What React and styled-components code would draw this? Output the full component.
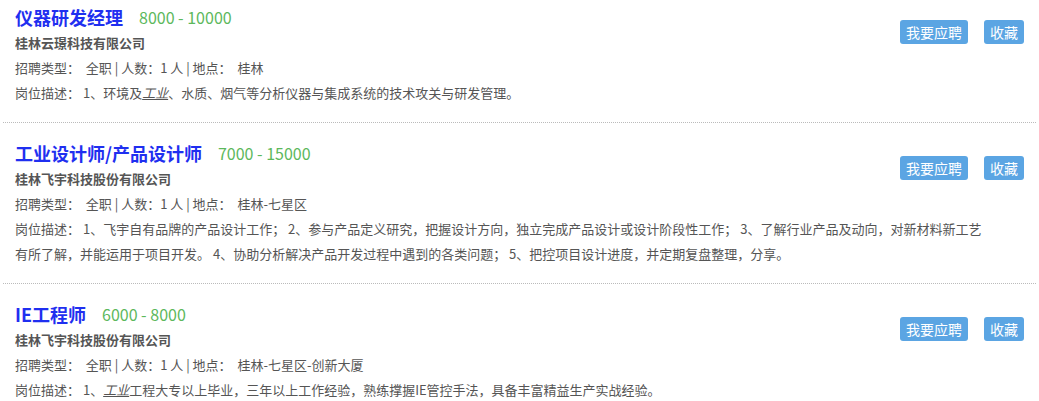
import styled, { createGlobalStyle } from "styled-components";

const GlobalStyle = createGlobalStyle`
    html, body {
        margin: 0;
        padding: 0;
        background: #fff;
    }

    body {
        font-family: "Noto Sans CJK SC", "Noto Sans", sans-serif;
        color: #555;
    }
`;

const List = styled.div`
    width: 1039px;
`;

const Item = styled.div`
    display: grid;
    grid-template-columns: 1fr auto;
    padding: 17px 12px 17px 12px;
    border-bottom: 1px dotted #bbb;
    margin: 0 3px;

    &:first-child {
        padding-top: 4px;
    }

    &:last-child {
        border-bottom: none;
    }
`;

const Header = styled.div`
    display: flex;
    align-items: center;
    height: 26px;
`;

const Title = styled.span`
    font-size: 18px;
    font-weight: 700;
    color: #1f2ff0;
`;

const Salary = styled.span`
    font-size: 16px;
    color: #5cb85c;
    margin-left: 16px;
`;

const Company = styled.div`
    font-size: 13px;
    font-weight: 700;
    line-height: 25px;
    color: #555;
`;

const Line = styled.div`
    font-size: 13px;
    line-height: 25px;
    color: #555;
    grid-column: ${props => (props.$full ? "1 / 3" : "1")};
    margin-right: ${props => (props.$full ? "36px" : "0")};
`;

const Link = styled.span`
    font-style: italic;
    text-decoration: underline;
`;

const Actions = styled.div`
    grid-column: 2;
    grid-row: 1 / 4;
    display: flex;
    gap: 16px;
    align-items: flex-start;
    margin-top: 16px;
`;

const Button = styled.button`
    height: 24px;
    padding: 0 6px;
    border: none;
    border-radius: 3px;
    background: #5ba5e3;
    color: #fff;
    font-family: inherit;
    font-size: 14px;
    line-height: 24px;
    cursor: pointer;
`;

const jobs = [
    {
        title: "仪器研发经理",
        salary: "8000 - 10000",
        company: "桂林云璟科技有限公司",
        place: "桂林",
        desc: <>岗位描述： 1、环境及<Link>工业</Link>、水质、烟气等分析仪器与集成系统的技术攻关与研发管理。</>,
    },
    {
        title: "工业设计师/产品设计师",
        salary: "7000 - 15000",
        company: "桂林飞宇科技股份有限公司",
        place: "桂林-七星区",
        desc: "岗位描述： 1、飞宇自有品牌的产品设计工作； 2、参与产品定义研究，把握设计方向，独立完成产品设计或设计阶段性工作； 3、了解行业产品及动向，对新材料新工艺有所了解，并能运用于项目开发。 4、协助分析解决产品开发过程中遇到的各类问题； 5、把控项目设计进度，并定期复盘整理，分享。",
    },
    {
        title: "IE工程师",
        salary: "6000 - 8000",
        company: "桂林飞宇科技股份有限公司",
        place: "桂林-七星区-创新大厦",
        desc: <>岗位描述： 1、<Link>工业</Link>工程大专以上毕业，三年以上工作经验，熟练撑握IE管控手法，具备丰富精益生产实战经验。</>,
    },
];

const App = () => {
    return (
        <>
            <GlobalStyle />
            <List>
                {jobs.map(job => (
                    <Item key={job.title}>
                        <Header>
                            <Title>{job.title}</Title>
                            <Salary>{job.salary}</Salary>
                        </Header>
                        <Actions>
                            <Button>我要应聘</Button>
                            <Button>收藏</Button>
                        </Actions>
                        <Company>{job.company}</Company>
                        <Line>招聘类型：&nbsp; 全职 | 人数：1 人 | 地点：&nbsp; {job.place}</Line>
                        <Line $full>{job.desc}</Line>
                    </Item>
                ))}
            </List>
        </>
    );
};

export default App;
